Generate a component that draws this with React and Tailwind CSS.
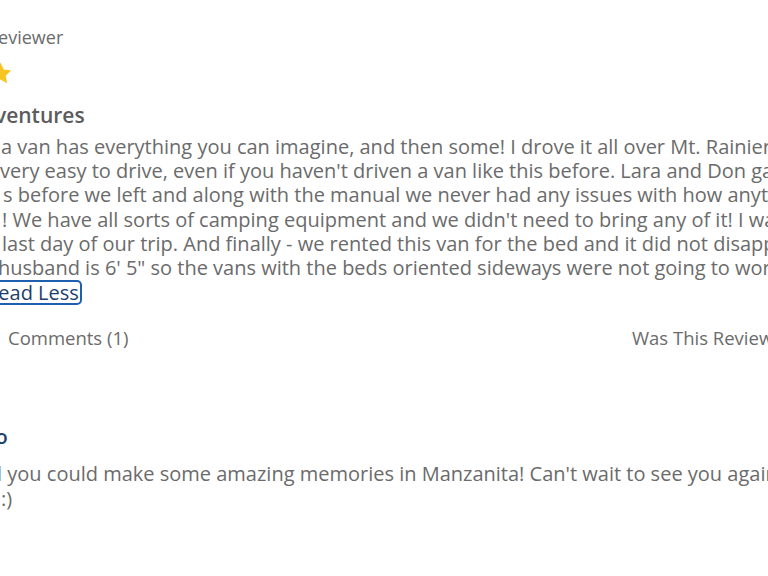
import React from 'react';

const bodyLines = [
  { text: 'a van has everything you can imagine, and then some! I drove it all over Mt. Rainier and', ml: 'ml-[13px]' },
  { text: 'very easy to drive, even if you haven\'t driven a van like this before. Lara and Don gave us', ml: 'ml-[12px]' },
  { text: 's before we left and along with the manual we never had any issues with how anything', ml: 'ml-[15px]' },
  { text: '! We have all sorts of camping equipment and we didn\'t need to bring any of it! I was sad', ml: 'ml-[14px]' },
  { text: 'last day of our trip. And finally - we rented this van for the bed and it did not disappoint', ml: 'ml-[14px]' },
  { text: 'husband is 6\' 5" so the vans with the beds oriented sideways were not going to work', ml: 'ml-[10px]' },
];

function Star() {
  return (
    <svg viewBox="0 0 24 24" className="h-[25px] w-[25px]" aria-hidden="true">
      <path
        d="M12 1.5l3.1 6.7 7.2.9-5.3 5 1.4 7.2L12 17.8l-6.4 3.5 1.4-7.2-5.3-5 7.2-.9z"
        fill="#f8c421"
      />
    </svg>
  );
}

export default function App() {
  return (
    <div
      className="h-[576px] w-[768px] overflow-hidden bg-white text-[#6b6b6b]"
      style={{ fontFamily: '"Open Sans", "Noto Sans", sans-serif' }}
    >
      <div className="ml-[-12px] w-[960px] pt-[25px]">
        <div className="ml-[-1px] text-[18px] leading-[24px]">Reviewer</div>
        <div className="mt-[12px] flex">
          <Star />
        </div>
        <h3 className="ml-[-20px] mt-[15px] text-[21px] font-semibold leading-[28px] text-[#5c5c5c]">Adventures</h3>
        <div className="mt-[6px] text-[20px] leading-[24.2px]">
          {bodyLines.map((line, i) => (
            <div key={i} className={`whitespace-nowrap ${line.ml}`}>{line.text}</div>
          ))}
          <button
            type="button"
            className="ml-[-6px] rounded-[5px] border-2 border-[#1f5fb0] pl-[2px] pr-[1px] text-[20px] leading-[21px] text-[#213f6c]"
          >
            Read Less
          </button>
        </div>
        <div className="mt-[21px] grid grid-cols-[644px_auto] text-[18.5px] leading-[24px]">
          <span className="pl-[20px]">Comments (1)</span>
          <span className="whitespace-nowrap">Was This Review Helpful?</span>
        </div>
        <div className="ml-[-11px] mt-[74px] text-[20px] font-semibold leading-[26px] text-[#213f6c]">Mo</div>
        <div className="mt-[12px] text-[20px] leading-[24.2px]">
          <div className="ml-[4px] whitespace-nowrap">ll you could make some amazing memories in Manzanita! Can't wait to see you again</div>
          <div className="ml-[13px] whitespace-nowrap">:)</div>
        </div>
      </div>
    </div>
  );
}
